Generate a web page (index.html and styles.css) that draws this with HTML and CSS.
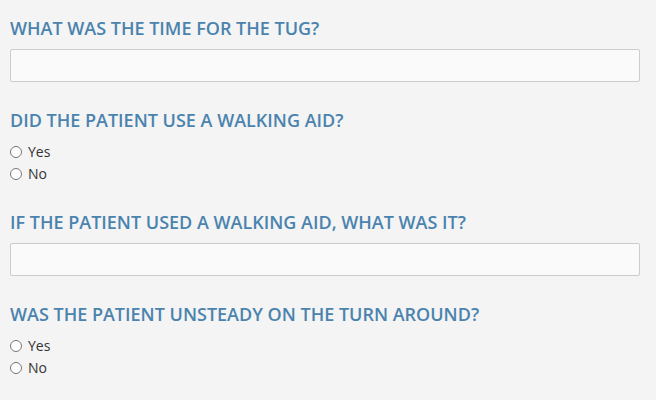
FILE: index.html
```html
<!DOCTYPE html>
<html lang="en">

<head>
    <meta charset="UTF-8">
    <meta name="viewport" content="width=device-width, initial-scale=1.0">
    <title>TUG Assessment</title>
    <link rel="stylesheet" href="styles.css">
</head>

<body>

    <form class="survey">
        <div class="question">
            <label class="question-title" for="tug-time">What was the time for the TUG?</label>
            <input type="text" id="tug-time" class="text-input">
        </div>

        <div class="question choices">
            <p class="question-title">Did the patient use a walking aid?</p>
            <label class="choice"><input type="radio" name="aid"> Yes</label>
            <label class="choice"><input type="radio" name="aid"> No</label>
        </div>

        <div class="question">
            <label class="question-title" for="aid-type">If the patient used a walking aid, what was it?</label>
            <input type="text" id="aid-type" class="text-input">
        </div>

        <div class="question choices">
            <p class="question-title">Was the patient unsteady on the turn around?</p>
            <label class="choice"><input type="radio" name="unsteady"> Yes</label>
            <label class="choice"><input type="radio" name="unsteady"> No</label>
        </div>
    </form>

</body>

</html>
```
FILE: styles.css
```css
body {
    margin: 0;
    padding: 17px 16px 0 10px;
    background: #f4f4f4;
    font-family: 'Open Sans', sans-serif;
    color: #333;
}

.question {
    margin-bottom: 27px;
}

.question.choices {
    margin-bottom: 26px;
}

.question-title {
    display: block;
    margin: 0 0 10px;
    font-size: 18px;
    line-height: 22px;
    font-weight: 600;
    text-transform: uppercase;
    color: #4a83ae;
}

.text-input {
    display: block;
    box-sizing: border-box;
    width: 100%;
    height: 33px;
    margin: 0;
    border: 1px solid #cccccc;
    border-radius: 2px;
    background: #fafafa;
}

.choice {
    display: flex;
    align-items: center;
    gap: 6px;
    font-size: 14px;
    line-height: 22px;
}

.choice input {
    margin: 0;
    width: 12px;
    height: 12px;
}
```
